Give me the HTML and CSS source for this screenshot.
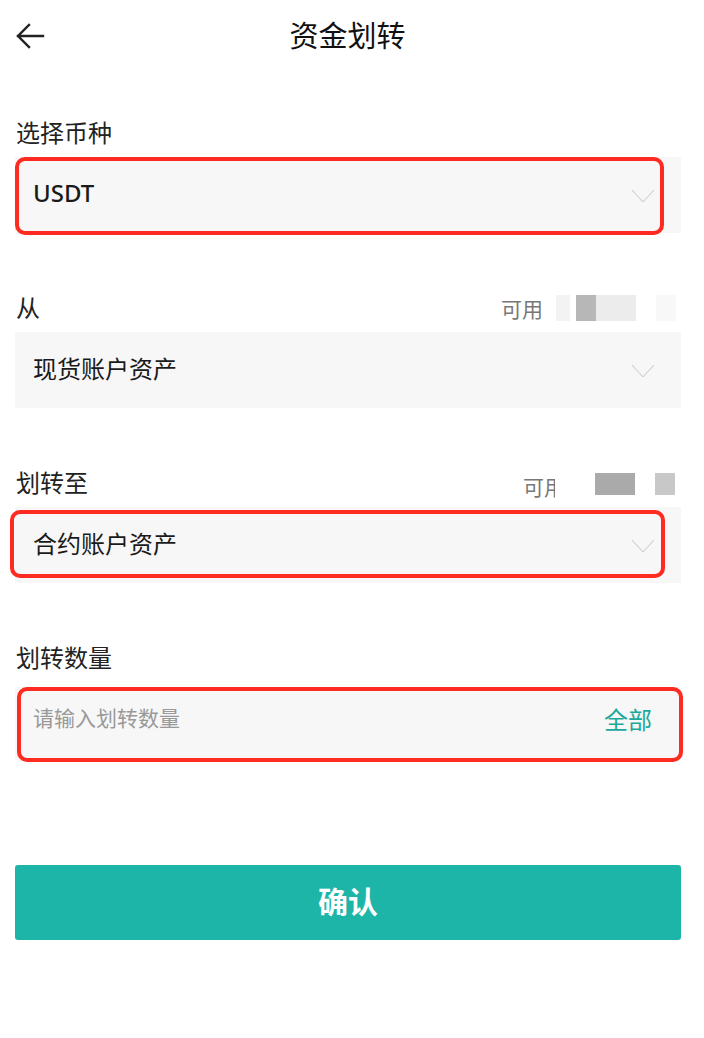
FILE: index.html
```html
<!DOCTYPE html>
<html lang="zh-CN">
<head>
  <meta charset="UTF-8" />
  <meta name="viewport" content="width=device-width, initial-scale=1.0"/>
  <title>资金划转</title>
  <link rel="stylesheet" href="styles.css">
</head>
<body>

  <header class="topbar">
    <button class="back-btn" aria-label="返回">
      <svg width="30" height="26" viewBox="0 0 30 26">
        <path d="M28 13H3M14 2L3 13l11 11" fill="none" stroke="#222" stroke-width="2.4" stroke-linecap="square"/>
      </svg>
    </button>
    <h1 class="title">资金划转</h1>
  </header>

  <main class="form">
    <section class="group">
      <div class="label-row">
        <label>选择币种</label>
      </div>
      <div class="select-box coin">
        <span class="value">USDT</span>
        <span class="chevron"></span>
        <span class="mark mark-coin"></span>
      </div>
    </section>

    <section class="group">
      <div class="label-row">
        <label>从</label>
        <div class="avail">
          <span>可用</span>
          <span class="blur b1"></span>
          <span class="blur b2"></span>
          <span class="blur b3"></span>
          <span class="blur b4"></span>
        </div>
      </div>
      <div class="select-box">
        <span class="value">现货账户资产</span>
        <span class="chevron"></span>
      </div>
    </section>

    <section class="group">
      <div class="label-row">
        <label>划转至</label>
        <div class="avail avail-to">
          <span>可用</span>
          <span class="fade"></span>
          <span class="blur b5"></span>
          <span class="blur b6"></span>
        </div>
      </div>
      <div class="select-box">
        <span class="value">合约账户资产</span>
        <span class="chevron"></span>
        <span class="mark mark-to"></span>
      </div>
    </section>

    <section class="group group-amount">
      <div class="label-row">
        <label>划转数量</label>
      </div>
      <div class="select-box amount">
        <input type="text" placeholder="请输入划转数量" />
        <button class="all-btn">全部</button>
        <span class="mark mark-amount"></span>
      </div>
    </section>

    <button class="confirm">确认</button>
  </main>

</body>
</html>
```

FILE: styles.css
```css
* { box-sizing: border-box; }

body {
  margin: 0;
  font-family: "Noto Sans CJK SC", "Noto Sans", sans-serif;
  background: #fff;
  color: #222;
}

.topbar {
  height: 74px;
  display: flex;
  align-items: center;
  justify-content: center;
  position: relative;
  padding: 0 9px 6px 0;
}

.back-btn {
  position: absolute;
  left: 15px;
  top: 23px;
  background: none;
  border: none;
  padding: 0;
  line-height: 0;
}

.title {
  margin: 0;
  font-size: 29px;
  font-weight: 400;
  color: #111;
}

.form {
  display: flex;
  flex-direction: column;
  padding: 37px 23px 0 15px;
  gap: 53px;
}

.label-row {
  height: 40px;
  margin-bottom: 6px;
  display: flex;
  align-items: center;
  justify-content: space-between;
}

.label-row label {
  font-size: 24px;
  margin-left: 1px;
  color: #222;
}

.avail {
  display: flex;
  align-items: center;
  font-size: 21px;
  color: #777;
  margin: 4px 5px 0 0;
}

.blur {
  display: inline-block;
  height: 26px;
}
.b1 { width: 14px; margin-left: 13px; background: #f3f3f3; }
.b2 { width: 20px; margin-left: 6px; background: #b7b7b7; }
.b3 { width: 40px; background: #ececec; }
.b4 { width: 20px; margin-left: 20px; background: #f8f8f8; }

.avail-to { margin: 10px 6px 0 0; }
.fade {
  width: 40px;
  height: 30px;
  margin-left: -10px;
  background: #fff;
}
.avail-to .blur { height: 22px; margin-top: -4px; }
.b5 { width: 40px; background: #aaa; }
.b6 { width: 20px; margin-left: 20px; background: #c8c8c8; }

.select-box {
  position: relative;
  height: 76px;
  background: #f7f7f7;
  display: flex;
  align-items: center;
  justify-content: space-between;
  padding: 0 27px 0 18px;
}

.value {
  font-size: 24px;
  color: #1a1a1a;
  margin-top: -6px;
}

.coin .value {
  font-weight: 500;
  font-family: "Noto Sans", "Noto Sans CJK SC", sans-serif;
}

.chevron {
  width: 22px;
  height: 12px;
  margin-top: 2px;
  background:
    linear-gradient(to top right, transparent calc(50% - 1px), #cfcfcf 50%, transparent calc(50% + 1px)) left / 50% 100% no-repeat,
    linear-gradient(to top left, transparent calc(50% - 1px), #cfcfcf 50%, transparent calc(50% + 1px)) right / 50% 100% no-repeat;
}

.group-amount .label-row { margin-bottom: 11px; }

.amount {
  height: 74px;
  padding-right: 29px;
}

.amount input {
  border: none;
  background: transparent;
  font: inherit;
  font-size: 21px;
  color: #222;
  outline: none;
  width: 300px;
  padding: 0;
  margin-top: -14px;
}
.amount input::placeholder { color: #999; }

.all-btn {
  border: none;
  background: none;
  padding: 0;
  font: inherit;
  font-size: 24px;
  color: #1aa99b;
  margin-top: -12px;
}

/* red highlight frames over the fields */
.mark {
  position: absolute;
  border: 4px solid #ff2a20;
  border-radius: 10px;
  pointer-events: none;
}
.mark-coin { left: 0; top: 0; right: 17px; bottom: -2px; }
.mark-to { left: -5px; top: 3px; right: 16px; bottom: 5px; }
.mark-amount { left: 2px; top: 0; right: -2px; bottom: -1px; }

.confirm {
  margin-top: 51px;
  height: 75px;
  border: none;
  border-radius: 3px;
  background: #1db5a8;
  color: #fff;
  font: inherit;
  font-size: 30px;
  font-weight: 700;
  padding-bottom: 7px;
}
```
